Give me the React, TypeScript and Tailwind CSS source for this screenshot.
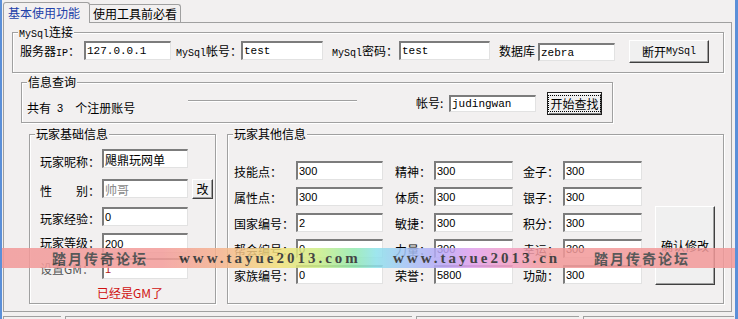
import type { ReactNode } from "react";

const cjk = "font-['Noto_Sans_CJK_SC',sans-serif]";
const mono = "font-['Liberation_Mono',monospace] text-[11px]";
const sans = "font-['Liberation_Sans',sans-serif] text-[11px]";
const latin = "font-['Liberation_Mono',monospace] text-[10px]";

function Box({ title, className, children }: { title: ReactNode; className: string; children?: ReactNode }) {
  return (
    <div className={`relative border border-[#a0a0a0] shadow-[inset_1px_1px_0_#fff,1px_1px_0_#fff] ${className}`}>
      <span className="absolute -top-[8px] left-[5px] bg-[#f2f0f0] px-[1px] leading-[14px] whitespace-nowrap">{title}</span>
      {children}
    </div>
  );
}

function Field({ value, className = "", font = sans }: { value: string; className?: string; font?: string }) {
  return (
    <input
      readOnly
      value={value}
      className={`h-[19px] shrink-0 bg-white border-t-2 border-l-2 border-r border-b border-t-[#7c7c7c] border-l-[#7c7c7c] border-r-[#e2e2e2] border-b-[#e2e2e2] pl-[1px] outline-none ${font} ${className}`}
    />
  );
}

function Btn({ children, className = "" }: { children: ReactNode; className?: string }) {
  return (
    <button className={`shrink-0 flex items-center justify-center whitespace-nowrap bg-[#f0f0f0] border border-t-white border-l-white border-r-[#404040] border-b-[#404040] shadow-[inset_-1px_-1px_0_#a0a0a0] leading-[14px] ${className}`}>
      {children}
    </button>
  );
}

const otherRows = [
  ["技能点：", "300", "精神：", "300", "金子：", "300"],
  ["属性点：", "300", "体质：", "300", "银子：", "300"],
  ["国家编号：", "2", "敏捷：", "300", "积分：", "300"],
  ["帮会编号：", "0", "力量：", "300", "幸运：", "300"],
  ["家族编号：", "0", "荣誉：", "5800", "功勋：", "300"],
];

export default function App() {
  return (
    <div className={`relative w-[738px] h-[319px] overflow-hidden bg-[#f2f0f0] border-l-2 border-r-[3px] border-[#5b8fd8] pt-[2px] text-[12px] leading-[14px] text-black ${cjk}`}>
      {/* tabs */}
      <div className="flex items-end h-[21px] pl-[1px]">
        <div className="relative z-10 h-[21px] w-[87px] flex items-center pl-[4px] bg-[#f2f0f0] border border-b-0 border-[#a0a0a0] rounded-t-[3px] text-[#2140a8]">
          基本使用功能
        </div>
        <div className="h-[18px] w-[91px] mb-[1px] flex items-center pl-[3px] border border-b-0 border-l-0 border-[#a0a0a0] rounded-tr-[3px]">
          使用工具前必看
        </div>
      </div>

      {/* tab panel */}
      <div className="-mt-px ml-[1px] w-[729px] h-[290px] border border-[#a0a0a0] flex flex-col items-start">
        <Box title={<><span className={latin}>MySql</span>连接</>} className="mt-[9px] ml-[8px] w-[712px] h-[41px]">
          <div className="flex items-start pt-[7px] pl-[7px] whitespace-nowrap">
            <span className="w-[64px] mt-[4px] shrink-0">服务器<span className={latin}>IP</span>：</span>
            <Field value="127.0.0.1" font={mono} className="w-[87px] mt-[1px]" />
            <span className="ml-[5px] w-[65px] mt-[4px] shrink-0"><span className={latin}>MySql</span>帐号：</span>
            <Field value="test" font={mono} className="w-[82px] mt-[1px]" />
            <span className="ml-[9px] w-[67px] mt-[4px] shrink-0"><span className={latin}>MySql</span>密码：</span>
            <Field value="test" font={mono} className="w-[91px] mt-[1px]" />
            <span className="ml-[9px] w-[39px] mt-[4px] shrink-0">数据库</span>
            <Field value="zebra" font={mono} className="w-[77px] mt-[3px] !h-[18px]" />
            <Btn className="ml-[14px] w-[80px] h-[23px]">断开<span className={latin}>MySql</span></Btn>
          </div>
        </Box>

        <Box title="信息查询" className="mt-[9px] ml-[17px] w-[592px] h-[41px]">
          <div className="flex items-start pl-[5px] whitespace-nowrap">
            <div className="w-[161px] mt-[18px] flex shrink-0">
              <span>共有</span>
              <span className={`${sans} ml-[6px] mr-[12px]`}>3</span>
              <span>个注册账号</span>
            </div>
            <div className="w-[169px] h-[2px] mt-[17px] border-t border-[#a0a0a0] border-b border-b-white shrink-0" />
            <span className="ml-[59px] w-[33px] mt-[13px] shrink-0">帐号:</span>
            <Field value="judingwan" font={mono} className="w-[87px] mt-[12px] !h-[17px]" />
            <Btn className="ml-[11px] mt-[9px] w-[55px] h-[23px] !border-[#202020] !shadow-[inset_1px_1px_0_#fff,inset_-1px_-1px_0_#808080]">
              <span className="border border-dotted border-black px-[1px] leading-[15px]">开始查找</span>
            </Btn>
          </div>
        </Box>

        <div className="flex mt-[11px]">
          <Box title="玩家基础信息" className="ml-[25px] w-[187px] h-[170px]">
            <div className="flex flex-col pl-[10px] whitespace-nowrap">
              <div className="flex items-start mt-[14px]">
                <span className="w-[62px] mt-[6px]">玩家昵称：</span>
                <Field value="飓鼎玩网单" font={cjk} className="w-[86px] text-[12px]" />
              </div>
              <div className="flex items-start mt-[10px]">
                <span className="w-[62px] mt-[5px]">性　　别：</span>
                <Field value="帅哥" font={cjk} className="w-[86px] text-[12px] text-[#8a8a8a]" />
                <Btn className="ml-[4px] w-[21px] h-[20px]">改</Btn>
              </div>
              <div className="flex items-start mt-[8px]">
                <span className="w-[62px] mt-[5px]">玩家经验：</span>
                <Field value="0" className="w-[86px]" />
              </div>
              <div className="flex items-start mt-[7px]">
                <span className="w-[62px] mt-[3px]">玩家等级：</span>
                <Field value="200" className="w-[86px] !h-[20px]" />
              </div>
              <div className="flex items-start mt-[5px]">
                <span className="w-[62px] mt-[4px] text-[#555]">设置GM：</span>
                <Field value="1" className="w-[86px] !h-[21px] text-[#b01818]" />
              </div>
              <span className="mt-[7px] ml-[57px] text-[#d01010]">已经是GM了</span>
            </div>
          </Box>

          <Box title="玩家其他信息" className="ml-[11px] w-[497px] h-[170px]">
            <div className="flex items-start whitespace-nowrap">
              <div className="flex flex-col gap-[7px] pt-[26px] pl-[6px]">
                {otherRows.map((r) => (
                  <div key={r[0]} className="flex items-start">
                    <span className="w-[62px] mt-[4px] shrink-0">{r[0]}</span>
                    <Field value={r[1]} className="w-[87px]" />
                    <span className="ml-[12px] w-[39px] mt-[4px] shrink-0">{r[2]}</span>
                    <Field value={r[3]} className="w-[79px]" />
                    <span className="ml-[10px] w-[40px] mt-[4px] shrink-0">{r[4]}</span>
                    <Field value={r[5]} className="w-[79px]" />
                  </div>
                ))}
              </div>
              <Btn className="mt-[71px] ml-[13px] w-[60px] h-[79px]">确认修改</Btn>
            </div>
          </Box>
        </div>
      </div>

      {/* status bar */}
      <div className="flex mt-[4px] pl-[1px] gap-[4px]">
        <div className="w-[58px] h-[10px] border-t border-l border-[#a0a0a0]" />
        <div className="w-[347px] h-[10px] border-t border-l border-[#a0a0a0]" />
        <div className="w-[163px] h-[10px] border-t border-l border-[#a0a0a0]" />
        <div className="w-[151px] h-[10px] border-t border-l border-[#a0a0a0]" />
      </div>

      {/* watermark band */}
      <div className="absolute -left-[2px] top-[248px] w-[738px] h-[20px] opacity-[0.85] bg-[linear-gradient(90deg,#f39a9a_0%,#f39c9a_22%,#f6b48e_30%,#f2e27a_38%,#cdee86_43%,#93eab0_48%,#8ee2ec_51%,#a3c4f6_55%,#b9a6f6_60%,#e0a0ec_64%,#f3a0c4_69%,#f39a9a_74%,#f39a9a_100%)] flex items-center whitespace-nowrap">
        <span className="ml-[52px] w-[127px] shrink-0 text-[14px] font-bold tracking-[2px] text-[#3e3e3e]">踏月传奇论坛</span>
        <span className="w-[214px] shrink-0 font-['Liberation_Serif',serif] text-[15px] font-bold tracking-[3px] text-[#262626]">www.tayue2013.com</span>
        <span className="w-[201px] shrink-0 font-['Liberation_Serif',serif] text-[15px] font-bold tracking-[3px] text-[#262626]">www.tayue2013.cn</span>
        <span className="shrink-0 text-[14px] font-bold tracking-[2px] text-[#3e3e3e]">踏月传奇论坛</span>
      </div>
    </div>
  );
}
